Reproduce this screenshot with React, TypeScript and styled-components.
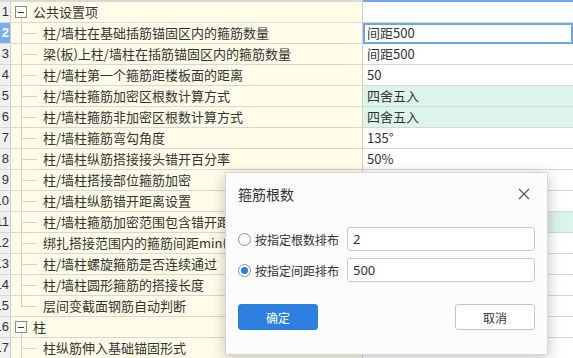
import styled, { createGlobalStyle } from 'styled-components'

type Item = {
  no: number
  label: string
  value?: string
  group?: boolean
  last?: boolean
  green?: boolean
  selected?: boolean
}

const items: Item[] = [
  { no: 1, label: '公共设置项', group: true },
  { no: 2, label: '柱/墙柱在基础插筋锚固区内的箍筋数量', value: '间距500', selected: true },
  { no: 3, label: '梁(板)上柱/墙柱在插筋锚固区内的箍筋数量', value: '间距500' },
  { no: 4, label: '柱/墙柱第一个箍筋距楼板面的距离', value: '50' },
  { no: 5, label: '柱/墙柱箍筋加密区根数计算方式', value: '四舍五入', green: true },
  { no: 6, label: '柱/墙柱箍筋非加密区根数计算方式', value: '四舍五入', green: true },
  { no: 7, label: '柱/墙柱箍筋弯勾角度', value: '135°' },
  { no: 8, label: '柱/墙柱纵筋搭接接头错开百分率', value: '50%' },
  { no: 9, label: '柱/墙柱搭接部位箍筋加密', value: '是' },
  { no: 10, label: '柱/墙柱纵筋错开距离设置', value: '按规范' },
  { no: 11, label: '柱/墙柱箍筋加密范围包含错开距离', value: '是', green: true },
  { no: 12, label: '绑扎搭接范围内的箍筋间距min(5d,100)', value: '是' },
  { no: 13, label: '柱/墙柱螺旋箍筋是否连续通过', value: '是' },
  { no: 14, label: '柱/墙柱圆形箍筋的搭接长度', value: 'max(lae,300)' },
  { no: 15, label: '层间变截面钢筋自动判断', value: '是', last: true },
  { no: 16, label: '柱', group: true },
  { no: 17, label: '柱纵筋伸入基础锚固形式', value: '全部伸入' },
]

const GlobalStyle = createGlobalStyle`
  html, body {
    margin: 0;
    padding: 0;
    background: #ffffff;
    overflow: hidden;
  }
  body {
    font-family: "Noto Sans CJK SC", "Noto Sans", sans-serif;
    color: #333333;
  }
`

const Screen = styled.div`
  position: relative;
  width: 573px;
  height: 358px;
  overflow: hidden;
  background: #ffffff;
`

const Grid = styled.div`
  display: flex;
  flex-direction: column;
`

const HeaderStrip = styled.div`
  display: grid;
  grid-template-columns: 363px 1fr;
  height: 2px;
`

const HeaderPart = styled.div<{ $active?: boolean }>`
  background: ${({ $active }) => ($active ? '#6ea6e6' : '#d9d9d9')};
`

const Row = styled.div`
  display: grid;
  grid-template-columns: 11px 352px 1fr;
  height: 21px;
  box-sizing: border-box;
  border-bottom: 1px solid #d7d7d7;
  font-size: 13px;
  line-height: 20px;
`

const RowNo = styled.div<{ $selected?: boolean }>`
  display: flex;
  justify-content: flex-end;
  overflow: hidden;
  box-sizing: border-box;
  padding-right: 1px;
  border-right: 1px solid #cfcfcf;
  background: ${({ $selected }) => ($selected ? '#79aeec' : '#f1f1f1')};
  color: ${({ $selected }) => ($selected ? '#ffffff' : '#333333')};
  font-family: "Liberation Sans", Arial, sans-serif;
  font-size: 13px;
  font-weight: ${({ $selected }) => ($selected ? 700 : 400)};
`

const TreeCell = styled.div`
  display: flex;
  align-items: center;
  box-sizing: border-box;
  border-right: 1px solid #d0d0d0;
  background: #fffde8;
  white-space: nowrap;
  overflow: hidden;
`

const Toggle = styled.span`
  position: relative;
  flex: none;
  width: 12px;
  height: 12px;
  box-sizing: border-box;
  margin-left: 4px;
  margin-right: 6px;
  border: 1px solid #8c8c8c;
  background: #ffffff;

  &::after {
    content: '';
    position: absolute;
    left: 2px;
    top: 5px;
    width: 6px;
    height: 1px;
    background: #333333;
  }

  &::before {
    content: '';
    position: absolute;
    left: 5px;
    top: 11px;
    height: 5px;
    border-left: 1px solid #d2d2d2;
  }
`

const Branch = styled.span<{ $last?: boolean }>`
  position: relative;
  flex: none;
  width: 32px;
  align-self: stretch;

  &::before {
    content: '';
    position: absolute;
    left: 10px;
    top: 0;
    bottom: ${({ $last }) => ($last ? '50%' : '-1px')};
    border-left: 1px solid #d2d2d2;
  }

  &::after {
    content: '';
    position: absolute;
    left: 10px;
    top: 50%;
    width: 16px;
    border-top: 1px solid #d2d2d2;
  }
`

const ValueCell = styled.div<{ $green?: boolean; $selected?: boolean }>`
  padding-left: 4px;
  white-space: nowrap;
  overflow: hidden;
  background: ${({ $green }) => ($green ? '#dcf5ea' : '#ffffff')};
  box-shadow: ${({ $selected }) => ($selected ? 'inset 0 0 0 2px #6ea6e6' : 'none')};
  margin-bottom: ${({ $selected }) => ($selected ? '-1px' : '0')};
  position: relative;
`

const Dialog = styled.div`
  position: absolute;
  left: 225px;
  top: 172px;
  width: 323px;
  height: 183px;
  box-sizing: border-box;
  padding: 12px 12px 0 12px;
  background: #fcfcfc;
  border: 1px solid #d6d6d6;
  box-shadow: 0 3px 14px rgba(0, 0, 0, 0.24);
  font-size: 12px;
`

const DialogHeader = styled.div`
  display: flex;
  align-items: center;
  justify-content: space-between;
  height: 18px;
  margin-bottom: 24px;
`

const Title = styled.div`
  font-size: 14px;
  color: #333333;
`

const CloseButton = styled.button`
  display: flex;
  align-items: center;
  justify-content: center;
  width: 14px;
  height: 14px;
  margin-right: 4px;
  padding: 0;
  border: none;
  background: none;
`

const Options = styled.div`
  display: flex;
  flex-direction: column;
  gap: 7px;
`

const OptionRow = styled.div`
  display: flex;
  align-items: center;
  height: 24px;
  color: #333333;
`

const OptionLabel = styled.label`
  display: flex;
  align-items: center;
  gap: 4px;
  width: 109px;
  flex: none;
`

const Radio = styled.span<{ $checked?: boolean }>`
  position: relative;
  flex: none;
  width: 13px;
  height: 13px;
  box-sizing: border-box;
  border-radius: 50%;
  border: 1px solid #8f8f8f;
  background: #ffffff;

  &::after {
    content: '';
    display: ${({ $checked }) => ($checked ? 'block' : 'none')};
    position: absolute;
    left: 2px;
    top: 2px;
    width: 7px;
    height: 7px;
    border-radius: 50%;
    background: #2d7fe0;
  }
`

const Field = styled.div`
  flex: 1;
  height: 24px;
  box-sizing: border-box;
  padding-left: 5px;
  border: 1px solid #c9c9c9;
  border-radius: 3px;
  background: #ffffff;
  font-family: "Noto Sans", sans-serif;
  font-size: 13px;
  line-height: 22px;
  color: #333333;
`

const Actions = styled.div`
  display: flex;
  justify-content: space-between;
  margin-top: 22px;
`

const Button = styled.button<{ $primary?: boolean }>`
  width: 80px;
  height: 26px;
  box-sizing: border-box;
  border-radius: 3px;
  border: 1px solid ${({ $primary }) => ($primary ? '#2d7fe0' : '#c6c6c6')};
  background: ${({ $primary }) => ($primary ? '#2d7fe0' : '#ffffff')};
  color: ${({ $primary }) => ($primary ? '#ffffff' : '#333333')};
  font-family: "Noto Sans CJK SC", sans-serif;
  font-size: 12px;
  padding: 0;
`

export default function App() {
  return (
    <Screen>
      <GlobalStyle />
      <Grid>
        <HeaderStrip>
          <HeaderPart />
          <HeaderPart $active />
        </HeaderStrip>
        {items.map((item) => (
          <Row key={item.no}>
            <RowNo $selected={item.selected}>{item.no}</RowNo>
            <TreeCell>
              {item.group ? <Toggle /> : <Branch $last={item.last} />}
              {item.label}
            </TreeCell>
            <ValueCell $green={item.green} $selected={item.selected}>
              {item.value}
            </ValueCell>
          </Row>
        ))}
      </Grid>

      <Dialog>
        <DialogHeader>
          <Title>箍筋根数</Title>
          <CloseButton>
            <svg width="12" height="12" viewBox="0 0 12 12">
              <path d="M1 1L11 11M11 1L1 11" stroke="#555" strokeWidth="1.1" fill="none" />
            </svg>
          </CloseButton>
        </DialogHeader>
        <Options>
          <OptionRow>
            <OptionLabel>
              <Radio />
              按指定根数排布
            </OptionLabel>
            <Field>2</Field>
          </OptionRow>
          <OptionRow>
            <OptionLabel>
              <Radio $checked />
              按指定间距排布
            </OptionLabel>
            <Field>500</Field>
          </OptionRow>
        </Options>
        <Actions>
          <Button $primary>确定</Button>
          <Button>取消</Button>
        </Actions>
      </Dialog>
    </Screen>
  )
}
